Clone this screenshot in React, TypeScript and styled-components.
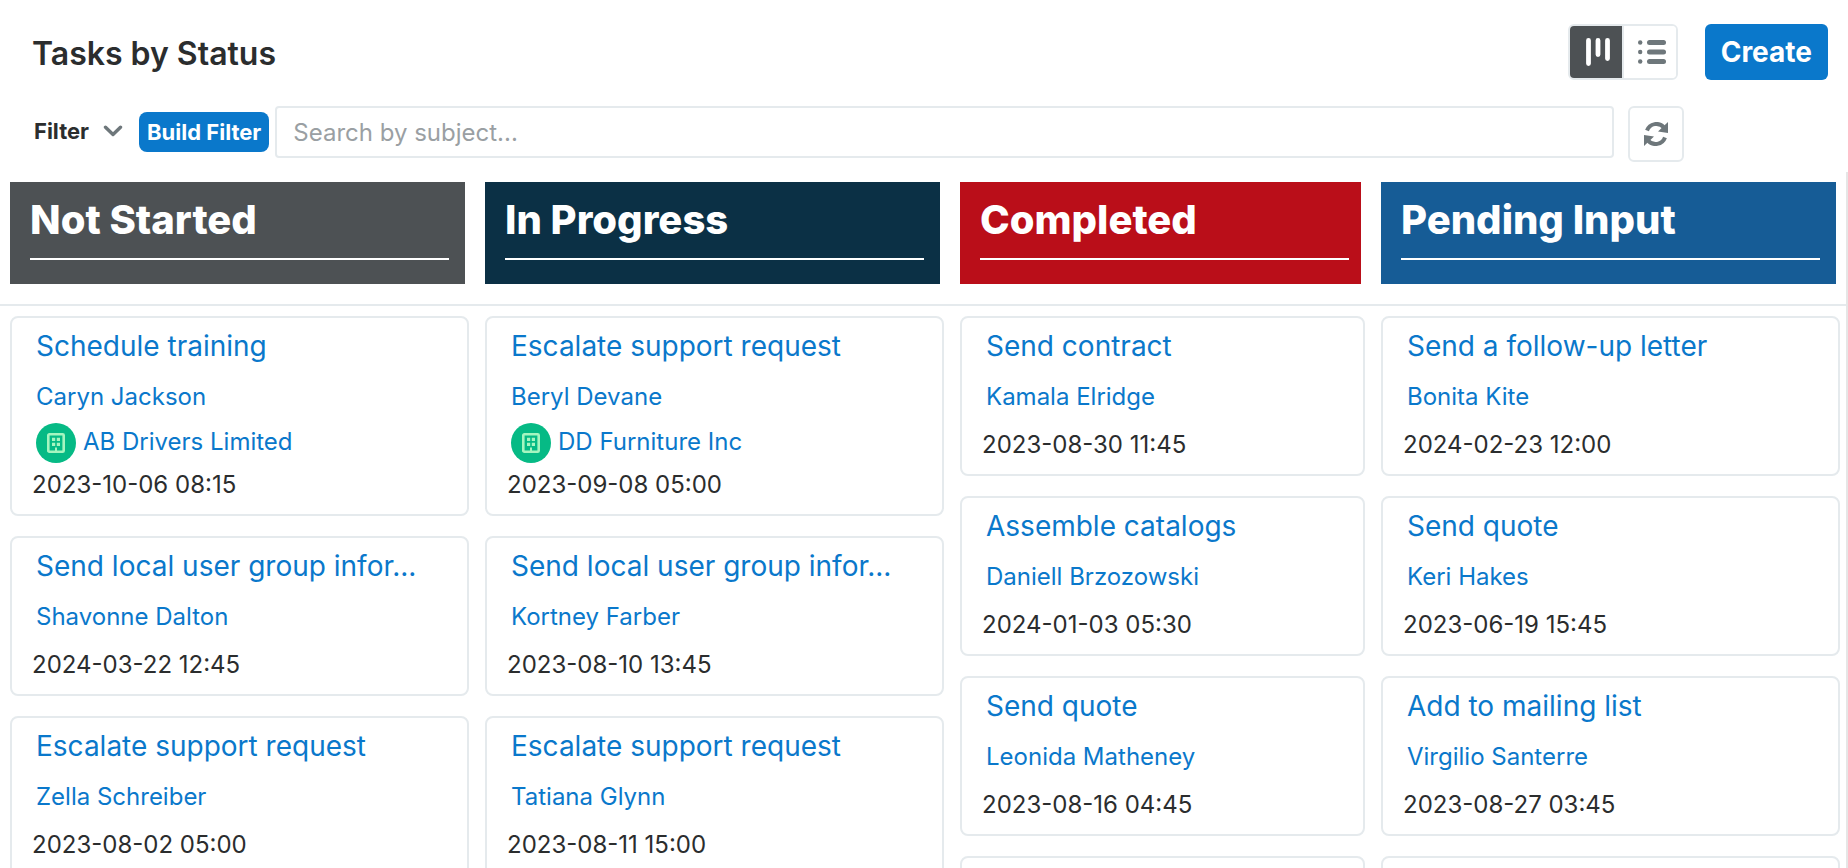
import React from "react";
import styled, { createGlobalStyle } from "styled-components";

const GlobalStyle = createGlobalStyle`
  * { box-sizing: border-box; }
  body { margin: 0; background: #fff; color: #2b2d2e; font-family: Inter, "Liberation Sans", sans-serif; }
  h1, h2, h3, p { margin: 0; }
  button, input { font-family: inherit; }
`;

const Page = styled.main`
  display: flex;
  flex-direction: column;
  height: 100vh;
  overflow: hidden;
`;

const TitleBar = styled.header`
  display: flex;
  align-items: center;
  padding: 24px 20px 0 32px;
  height: 80px;
  flex: none;
`;

const PageTitle = styled.h1`
  flex: 1;
  padding-top: 4px;
  font-size: 32px;
  line-height: 40px;
  font-weight: 600;
`;

const ViewToggle = styled.div`
  display: flex;
  height: 56px;
  margin-right: 27px;
  border: 2px solid #e5eaed;
  border-radius: 6px;
  overflow: hidden;
`;

const ViewButton = styled.button<{ $active?: boolean }>`
  display: flex;
  align-items: center;
  justify-content: center;
  width: ${(p) => (p.$active ? 54 : 52)}px;
  padding: 0 0 0 4px;
  border: 0;
  border-right: ${(p) => (p.$active ? "2px solid #e5eaed" : "0")};
  background: ${(p) => (p.$active ? "#4d5154" : "#fff")};
  color: ${(p) => (p.$active ? "#fff" : "#6e777b")};
`;

const CreateButton = styled.button`
  height: 56px;
  padding: 0 16px;
  border: 0;
  border-radius: 6px;
  background: #0a78cb;
  color: #fff;
  font-size: 28px;
  font-weight: 700;
`;

const FilterBar = styled.div`
  display: flex;
  align-items: flex-start;
  height: 92px;
  padding: 26px 164px 0 34px;
  flex: none;
`;

const FilterButton = styled.button`
  display: flex;
  align-items: center;
  gap: 14px;
  width: 105px;
  height: 50px;
  padding: 0;
  border: 0;
  background: none;
  color: #2b2d2e;
  font-size: 22px;
  font-weight: 700;
`;

const BuildFilterButton = styled.button`
  height: 40px;
  margin: 6px 6px 0 0;
  padding: 0 8px;
  border: 0;
  border-radius: 8px;
  background: #0a78cb;
  color: #fff;
  font-size: 22px;
  font-weight: 700;
  white-space: nowrap;
`;

const SearchInput = styled.input`
  flex: 1;
  min-width: 0;
  height: 52px;
  padding: 0 16px;
  border: 2px solid #e5eaed;
  border-radius: 4px;
  color: #2b2d2e;
  font-size: 24px;
  &::placeholder { color: #9a9fa3; opacity: 1; }
`;

const RefreshButton = styled.button`
  display: flex;
  align-items: center;
  justify-content: center;
  width: 56px;
  height: 56px;
  margin-left: 14px;
  padding: 0;
  border: 2px solid #e5eaed;
  border-radius: 6px;
  background: #fff;
  color: #6e777b;
`;

const Board = styled.section`
  display: flex;
  flex-direction: column;
  flex: 1;
  min-height: 0;
  border-right: 2px solid #e6e6e6;
`;

const BoardGrid = styled.div`
  display: grid;
  grid-template-columns: 475fr 475fr 421fr 475fr;
`;

const StatusRow = styled(BoardGrid)`
  padding: 10px 0 20px;
  border-bottom: 2px solid #e5eaed;
`;

const CardGrid = styled(BoardGrid)`
  flex: 1;
  min-height: 0;
  overflow: hidden;
`;

const StatusHeader = styled.div<{ $color: string; $narrow?: boolean }>`
  height: 102px;
  margin: 0 10px;
  padding: 14px ${(p) => (p.$narrow ? 12 : 16)}px 24px 20px;
  background: ${(p) => p.$color};
`;

const StatusName = styled.h2`
  height: 64px;
  border-bottom: 2px solid #fff;
  color: #fff;
  font-size: 40px;
  line-height: 48px;
  font-weight: 800;
  white-space: nowrap;
`;

const CardList = styled.div`
  display: flex;
  flex-direction: column;
  gap: 20px;
  min-width: 0;
  padding: 10px 6px 0 10px;
`;

const Card = styled.article`
  flex: none;
  padding: 8px 24px 11px;
  border: 2px solid #e5eaed;
  border-radius: 8px;
`;

const Subject = styled.h3`
  height: 40px;
  font-size: 28px;
  line-height: 40px;
  font-weight: 400;
  overflow: hidden;
  text-overflow: ellipsis;
  white-space: nowrap;
`;

const Link = styled.a`
  color: #0a78cb;
  text-decoration: none;
`;

const Person = styled.p`
  margin-top: 13px;
  font-size: 24px;
  line-height: 36px;
`;

const Company = styled.p`
  display: flex;
  align-items: flex-start;
  gap: 7px;
  margin-top: 8px;
  font-size: 24px;
  line-height: 38px;
`;

const CompanyBadge = styled.span`
  display: flex;
  align-items: center;
  justify-content: center;
  width: 40px;
  height: 40px;
  border-radius: 50%;
  background: #06ba85;
`;

const DueDate = styled.time<{ $tight?: boolean }>`
  display: block;
  margin: ${(p) => (p.$tight ? 4 : 12)}px 0 0 -4px;
  font-size: 24px;
  line-height: 36px;
`;

const KanbanIcon = () => (
  <svg width="24" height="28" viewBox="0 0 24 28" fill="none" stroke="currentColor" strokeWidth="4.800" strokeLinecap="round" aria-hidden="true">
    <path d="M2.500 2.500v23M12 2.500v14M21.500 2.500v18" />
  </svg>
);

const ListIcon = () => (
  <svg width="28" height="24" viewBox="0 0 28 24" fill="currentColor" aria-hidden="true">
    <circle cx="2.200" cy="2.500" r="2.200" />
    <circle cx="2.200" cy="12" r="2.200" />
    <circle cx="2.200" cy="21.500" r="2.200" />
    <rect x="9" y="0" width="19" height="5" rx="2.500" />
    <rect x="9" y="9.500" width="19" height="5" rx="2.500" />
    <rect x="9" y="19" width="19" height="5" rx="2.500" />
  </svg>
);

const ChevronIcon = () => (
  <svg width="20" height="12" viewBox="0 0 20 12" fill="none" stroke="#6e777b" strokeWidth="3.400" strokeLinecap="round" strokeLinejoin="round" aria-hidden="true">
    <path d="M2.500 2.200 10 9.400l7.500-7.200" />
  </svg>
);

const RefreshIcon = () => (
  <svg width="24" height="24" viewBox="0 0 24 24" aria-hidden="true">
    <path d="M3 8.500A10 10 0 0 1 20 5.500M21 15.500A10 10 0 0 1 4 18.500" fill="none" stroke="currentColor" strokeWidth="4" />
    <path d="M24 0v11L14 9.500zM0 24V13l10 1.500z" fill="currentColor" />
  </svg>
);

const BuildingIcon = () => (
  <svg width="18" height="20" viewBox="0 0 18 20" fill="none" aria-hidden="true">
    <rect x="1.300" y="1.300" width="15.400" height="17.400" rx="1" stroke="#a6f5c0" strokeWidth="2.600" />
    <path d="M5 4.800h3.200v3.200H5zM9.800 4.800H13v3.200H9.800zM5 9.800h3.200V13H5zM9.800 9.800H13V13H9.800zM8 14.500h2V19H8z" fill="#a6f5c0" />
  </svg>
);

type Task = { subject: string; person: string; company?: string; due: string };
type Status = { name: string; color: string; narrow?: boolean; tasks: Task[] };

const statuses: Status[] = [
  {
    name: "Not Started",
    color: "#4d5154",
    tasks: [
      { subject: "Schedule training", person: "Caryn Jackson", company: "AB Drivers Limited", due: "2023-10-06 08:15" },
      { subject: "Send local user group infor...", person: "Shavonne Dalton", due: "2024-03-22 12:45" },
      { subject: "Escalate support request", person: "Zella Schreiber", due: "2023-08-02 05:00" },
    ],
  },
  {
    name: "In Progress",
    color: "#0b3045",
    tasks: [
      { subject: "Escalate support request", person: "Beryl Devane", company: "DD Furniture Inc", due: "2023-09-08 05:00" },
      { subject: "Send local user group infor...", person: "Kortney Farber", due: "2023-08-10 13:45" },
      { subject: "Escalate support request", person: "Tatiana Glynn", due: "2023-08-11 15:00" },
    ],
  },
  {
    name: "Completed",
    color: "#ba0e19",
    narrow: true,
    tasks: [
      { subject: "Send contract", person: "Kamala Elridge", due: "2023-08-30 11:45" },
      { subject: "Assemble catalogs", person: "Daniell Brzozowski", due: "2024-01-03 05:30" },
      { subject: "Send quote", person: "Leonida Matheney", due: "2023-08-16 04:45" },
      { subject: "", person: "", due: "" },
    ],
  },
  {
    name: "Pending Input",
    color: "#165c96",
    tasks: [
      { subject: "Send a follow-up letter", person: "Bonita Kite", due: "2024-02-23 12:00" },
      { subject: "Send quote", person: "Keri Hakes", due: "2023-06-19 15:45" },
      { subject: "Add to mailing list", person: "Virgilio Santerre", due: "2023-08-27 03:45" },
      { subject: "", person: "", due: "" },
    ],
  },
];

const TaskCard = ({ task }: { task: Task }) => (
  <Card>
    <Subject>
      <Link href="#task">{task.subject}</Link>
    </Subject>
    <Person>
      <Link href="#person">{task.person}</Link>
    </Person>
    {task.company && (
      <Company>
        <CompanyBadge>
          <BuildingIcon />
        </CompanyBadge>
        <Link href="#company">{task.company}</Link>
      </Company>
    )}
    <DueDate $tight={!!task.company}>{task.due}</DueDate>
  </Card>
);

export default function App() {
  return (
    <Page>
      <GlobalStyle />
      <TitleBar>
        <PageTitle>Tasks by Status</PageTitle>
        <ViewToggle>
          <ViewButton $active aria-label="Board view" aria-pressed="true">
            <KanbanIcon />
          </ViewButton>
          <ViewButton aria-label="List view" aria-pressed="false">
            <ListIcon />
          </ViewButton>
        </ViewToggle>
        <CreateButton>Create</CreateButton>
      </TitleBar>
      <FilterBar>
        <FilterButton>
          Filter
          <ChevronIcon />
        </FilterButton>
        <BuildFilterButton>Build Filter</BuildFilterButton>
        <SearchInput type="text" aria-label="Search by subject" placeholder="Search by subject..." />
        <RefreshButton aria-label="Refresh">
          <RefreshIcon />
        </RefreshButton>
      </FilterBar>
      <Board>
        <StatusRow>
          {statuses.map((s) => (
            <StatusHeader key={s.name} $color={s.color} $narrow={s.narrow}>
              <StatusName>{s.name}</StatusName>
            </StatusHeader>
          ))}
        </StatusRow>
        <CardGrid>
          {statuses.map((s) => (
            <CardList key={s.name}>
              {s.tasks.map((t, i) => (
                <TaskCard key={i} task={t} />
              ))}
            </CardList>
          ))}
        </CardGrid>
      </Board>
    </Page>
  );
}
